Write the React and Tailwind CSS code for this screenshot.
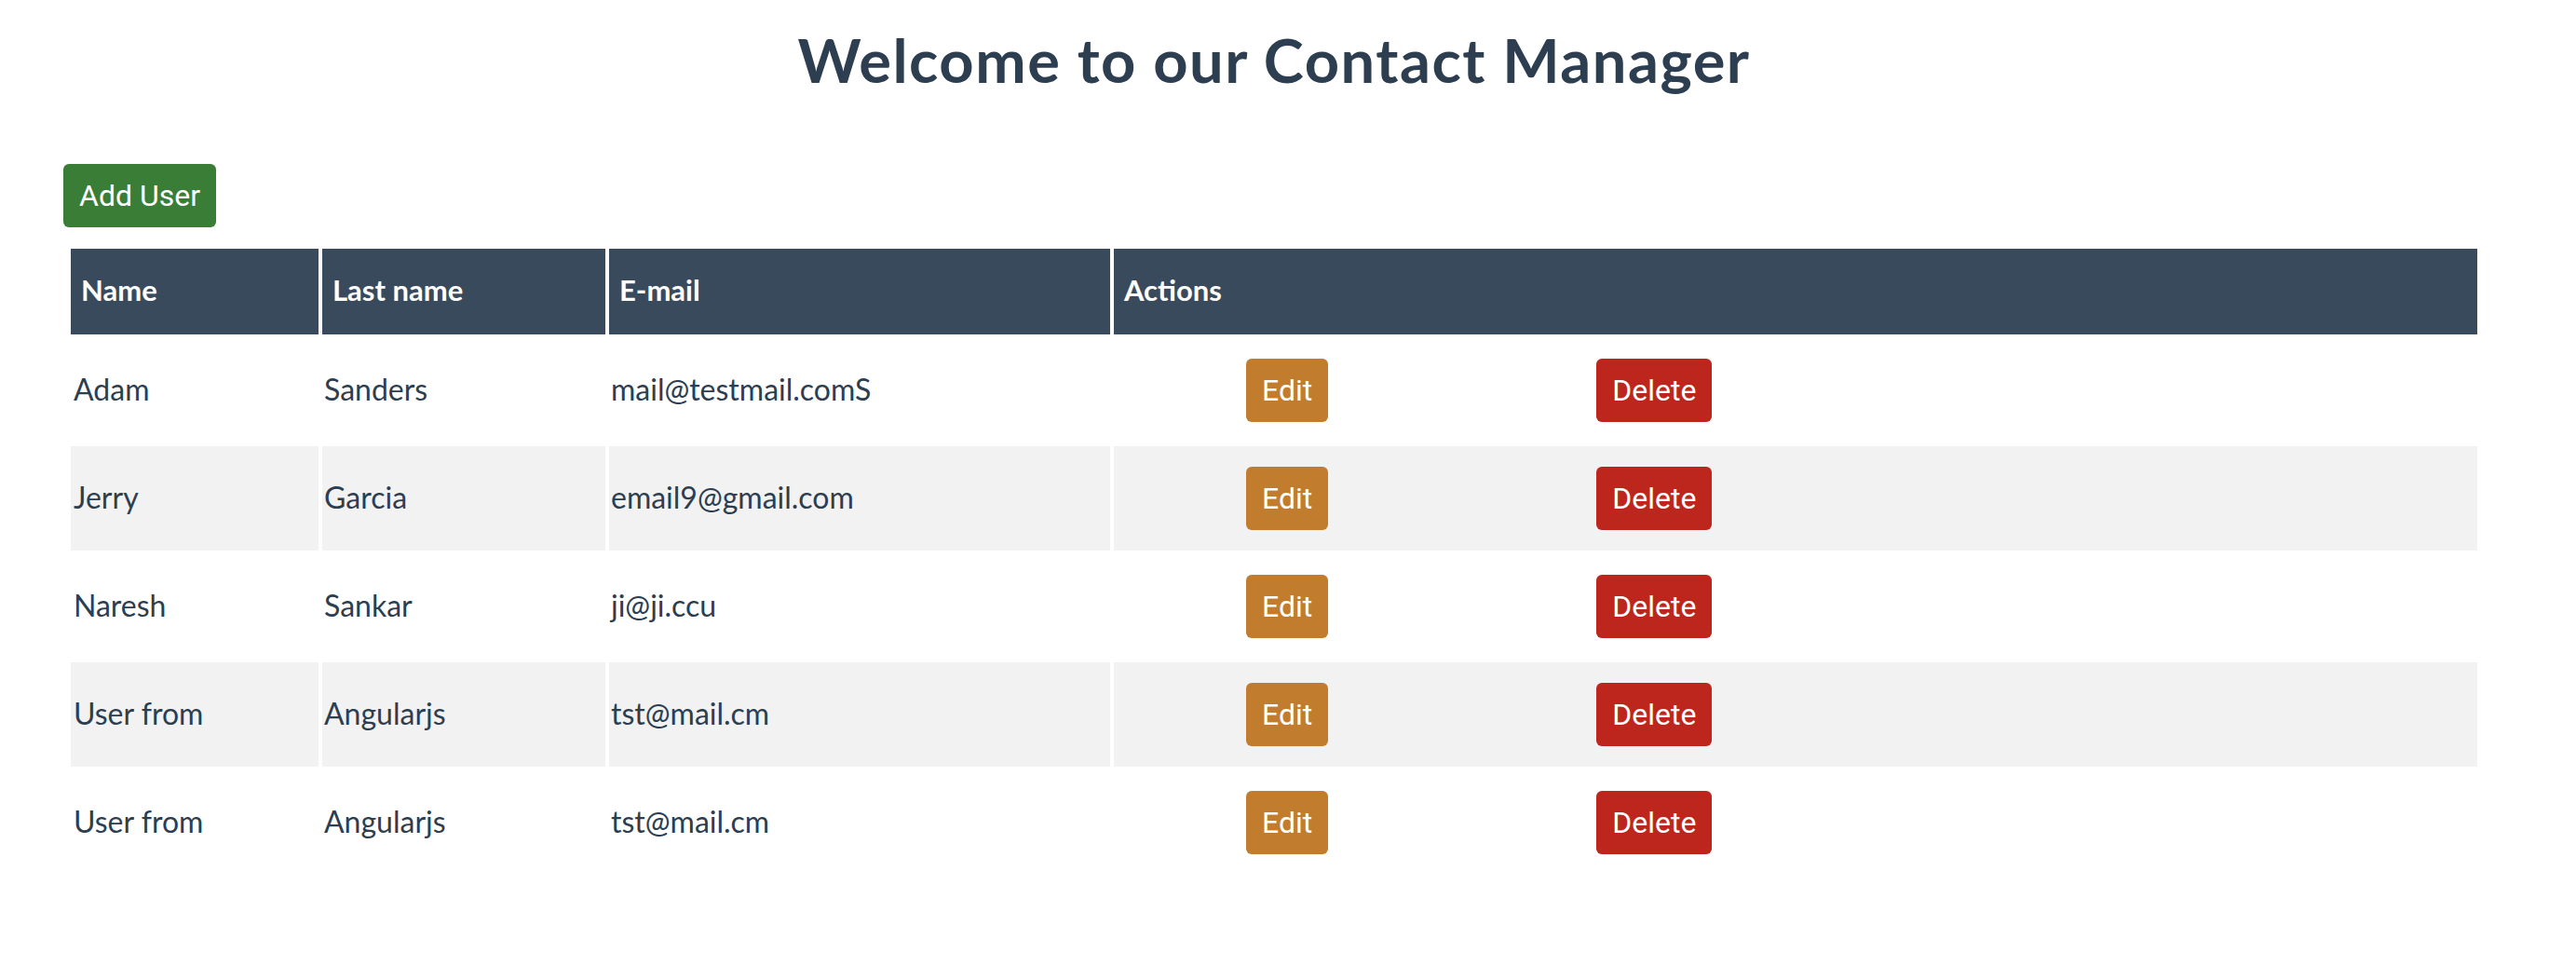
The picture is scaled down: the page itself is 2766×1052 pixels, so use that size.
import React from 'react';

const users = [
    { name: 'Adam', lastName: 'Sanders', email: 'mail@testmail.comS' },
    { name: 'Jerry', lastName: 'Garcia', email: 'email9@gmail.com' },
    { name: 'Naresh', lastName: 'Sankar', email: 'ji@ji.ccu' },
    { name: 'User from', lastName: 'Angularjs', email: 'tst@mail.cm' },
    { name: 'User from', lastName: 'Angularjs', email: 'tst@mail.cm' },
];

const btn = "inline-flex items-center h-[68px] px-[17px] rounded-[6px] text-white text-[32px] font-['Roboto',sans-serif] leading-none";

const App = () => {
    return (
        <div className="min-h-screen bg-white text-[#2c3e50] font-['Lato',sans-serif]">
            <h1 className="pt-[26px] pr-[30px] text-center text-[65px] font-bold leading-[76px] tracking-[1.5px]">
                Welcome to our Contact Manager
            </h1>

            <div className="mt-[74px] pl-[68px]">
                <button className={`${btn} bg-[#397d36]`}>Add User</button>
            </div>

            <table className="mt-[19px] ml-[72px] w-[2592px] border-separate border-spacing-[4px] table-fixed">
                <colgroup>
                    <col className="w-[266px]" />
                    <col className="w-[304px]" />
                    <col className="w-[538px]" />
                    <col />
                </colgroup>
                <thead>
                    <tr className="h-[92px]">
                        {['Name', 'Last name', 'E-mail', 'Actions'].map(h => (
                            <th key={h} className="bg-[#394a5c] text-white text-left pl-[11px] pb-[3px] text-[31px] font-bold">{h}</th>
                        ))}
                    </tr>
                </thead>
                <tbody>
                    {users.map((u, i) => (
                        <tr key={i} className="h-[112px]">
                            <td className={`pl-[3px] pb-[3px] text-[32px] ${i % 2 ? 'bg-[#f2f2f2]' : 'bg-white'}`}>{u.name}</td>
                            <td className={`pl-[2px] pb-[3px] text-[32px] ${i % 2 ? 'bg-[#f2f2f2]' : 'bg-white'}`}>{u.lastName}</td>
                            <td className={`pl-[2px] pb-[3px] text-[32px] ${i % 2 ? 'bg-[#f2f2f2]' : 'bg-white'}`}>{u.email}</td>
                            <td className={`${i % 2 ? 'bg-[#f2f2f2]' : 'bg-white'}`}>
                                <div className="flex items-center pl-[142px]">
                                    <button className={`${btn} bg-[#c17d2d]`}>Edit</button>
                                    <button className={`${btn} bg-[#bc261c] ml-[288px]`}>Delete</button>
                                </div>
                            </td>
                        </tr>
                    ))}
                </tbody>
            </table>
        </div>
    );
};

export default App;
